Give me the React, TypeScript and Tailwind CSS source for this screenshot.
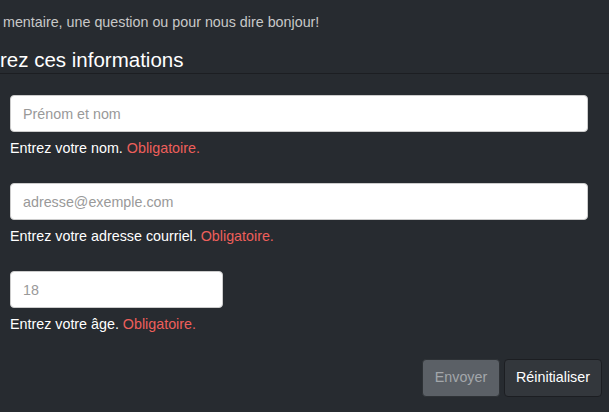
import { useState } from "react";

export default function App() {
  const [form, setForm] = useState({ nom: "", courriel: "", age: "" });

  const handleChange = (e: React.ChangeEvent<HTMLInputElement>) => {
    setForm({ ...form, [e.target.name]: e.target.value });
  };

  const inputClass =
    "h-[37px] rounded-[4px] border border-[#cccccc] bg-white px-3 text-[14.3px] text-[#555] outline-none placeholder:text-[#999]";

  return (
    <section
      className="min-h-[412px] w-[609px] overflow-hidden bg-[#272b30] text-[14.3px] text-[#c8c8c8]"
      style={{ fontFamily: '"Liberation Sans", Arial, sans-serif' }}
    >
      <p className="pt-[12px] pl-[3px] leading-[20px]">
        mentaire, une question ou pour nous dire bonjour!
      </p>

      <form className="mt-[16px] flex flex-col" onSubmit={(e) => e.preventDefault()}>
        <h2 className="border-b border-[#1c1e22] pb-[1px] text-[20.5px] leading-[24px] text-white">
          rez ces informations
        </h2>

        <div className="mt-[21px] flex flex-col pl-[10px] pr-[21px]">
          <input
            value={form.nom}
            onChange={handleChange}
            name="nom"
            type="text"
            placeholder="Prénom et nom"
            className={inputClass}
          />
          <p className="mt-[6px] leading-[20px] text-white">
            Entrez votre nom. <span className="text-[#ee5f5b]">Obligatoire.</span>
          </p>

          <input
            value={form.courriel}
            onChange={handleChange}
            name="courriel"
            type="email"
            placeholder="adresse@exemple.com"
            className={`mt-[25px] ${inputClass}`}
          />
          <p className="mt-[6px] leading-[20px] text-white">
            Entrez votre adresse courriel.{" "}
            <span className="text-[#ee5f5b]">Obligatoire.</span>
          </p>

          <input
            value={form.age}
            onChange={handleChange}
            name="age"
            type="text"
            placeholder="18"
            className={`mt-[25px] w-[213px] ${inputClass}`}
          />
          <p className="mt-[6px] leading-[20px] text-white">
            Entrez votre âge. <span className="text-[#ee5f5b]">Obligatoire.</span>
          </p>
        </div>

        <div className="mt-[25px] flex justify-end gap-[4px] pr-[7px]">
          <button
            type="submit"
            disabled
            className="h-[38px] w-[78px] rounded-[4px] border border-[#2e3236] bg-[#5b6066] text-[14.3px] text-[#a3a7ab]"
          >
            Envoyer
          </button>
          <button
            type="reset"
            onClick={() => setForm({ nom: "", courriel: "", age: "" })}
            className="h-[38px] w-[98px] rounded-[4px] border border-[#1c1e22] bg-[#33373c] text-[14.3px] text-white"
          >
            Réinitialiser
          </button>
        </div>
      </form>
    </section>
  );
}
